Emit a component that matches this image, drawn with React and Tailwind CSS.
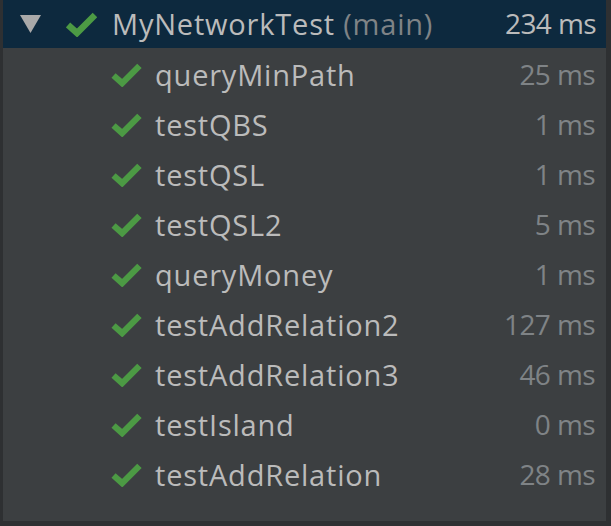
const tests = [
  { name: "queryMinPath", time: "25 ms" },
  { name: "testQBS", time: "1 ms" },
  { name: "testQSL", time: "1 ms" },
  { name: "testQSL2", time: "5 ms" },
  { name: "queryMoney", time: "1 ms" },
  { name: "testAddRelation2", time: "127 ms" },
  { name: "testAddRelation3", time: "46 ms" },
  { name: "testIsland", time: "0 ms" },
  { name: "testAddRelation", time: "28 ms" },
];

function Check({ className }) {
  return (
    <svg viewBox="0 0 31 25" className={className}>
      <path d="M2 13 L11 21 L29 3" fill="none" stroke="#4c9a44" strokeWidth="6.5" strokeLinejoin="miter" />
    </svg>
  );
}

export default function App() {
  return (
    <div className="w-[611px] h-[526px] bg-[#2e3032] overflow-hidden" style={{ fontFamily: '"Open Sans", "Noto Sans", sans-serif' }}>
      <div className="ml-[3px] w-[603px] h-[521px] bg-[#3c3f41]">
        <div className="h-[48px] bg-[#0d293e] flex items-center">
          <svg viewBox="0 0 21 18" className="w-[21px] h-[18px] ml-[17px]">
            <path d="M0 0 H21 L10.5 18 Z" fill="#a9a9a9" />
          </svg>
          <Check className="w-[31px] h-[25px] ml-[25px]" />
          <span className="ml-[15px] text-[29px] tracking-[0.8px] text-[#bbbbbb] leading-none pb-[2px]">
            MyNetworkTest <span className="text-[#7f8386]">(main)</span>
          </span>
          <span className="ml-auto mr-[10px] text-[28px] tracking-[-0.6px] text-[#bbbbbb] leading-none pb-[2px]">234 ms</span>
        </div>
        <div className="pt-[2px]">
          {tests.map((t) => (
            <div key={t.name} className="h-[50px] flex items-center">
              <Check className="w-[31px] h-[24px] ml-[108px]" />
              <span className="ml-[13px] text-[29px] tracking-[0.8px] text-[#bbbbbb] leading-none pb-[2px]">{t.name}</span>
              <span className="ml-auto mr-[11px] text-[28px] tracking-[-0.6px] text-[#7f8386] leading-none pb-[2px]">{t.time}</span>
            </div>
          ))}
        </div>
      </div>
    </div>
  );
}
